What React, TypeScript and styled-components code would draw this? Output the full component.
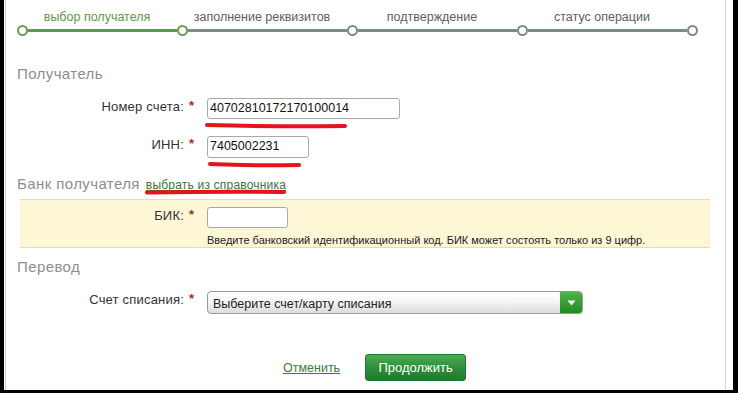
import React from "react";
import styled, { createGlobalStyle } from "styled-components";

const GlobalStyle = createGlobalStyle`
  html, body {
    margin: 0;
    padding: 0;
    background: #000;
  }
  body {
    font-family: "Liberation Sans", Arial, sans-serif;
  }
`;

const Frame = styled.div`
  width: 729px;
  height: 390px;
  margin-left: 4px;
  background: #fff;
  padding-left: 1px;
  box-sizing: border-box;
  overflow: hidden;
`;

const Panel = styled.div`
  width: 721px;
  height: 390px;
  box-sizing: border-box;
  border-left: 1px solid #cfcfcf;
  border-right: 1px solid #d6d6d6;
  padding-left: 11px;
`;

const Steps = styled.div`
  display: flex;
  align-items: flex-end;
  padding-top: 9px;
`;

const Step = styled.div<{ $w?: number }>`
  display: flex;
  flex-direction: column;
  width: ${(p) => (p.$w ? `${p.$w}px` : "auto")};
`;

const StepLabel = styled.div<{ $active?: boolean }>`
  height: 16px;
  line-height: 16px;
  font-size: 12.5px;
  text-align: center;
  white-space: nowrap;
  color: ${(p) => (p.$active ? "#5c9a45" : "#5e5e5e")};
`;

const Track = styled.div`
  display: flex;
  align-items: center;
  height: 11px;
`;

const Dot = styled.span<{ $active?: boolean }>`
  width: 11px;
  height: 11px;
  box-sizing: border-box;
  border-radius: 50%;
  background: #fff;
  border: 2px solid ${(p) => (p.$active ? "#64a04f" : "#7c8a8b")};
  flex: none;
`;

const Line = styled.span<{ $active?: boolean }>`
  flex: 1;
  height: 3px;
  background: ${(p) => (p.$active ? "#5e9a49" : "#7b8a8b")};
`;

const Heading = styled.div<{ $mt: number }>`
  margin-top: ${(p) => p.$mt}px;
  font-size: 15px;
  line-height: 18px;
  letter-spacing: 0.4px;
  color: #8e8e8e;
  display: flex;
  align-items: baseline;
  gap: 6px;
`;

const Row = styled.div<{ $mt: number }>`
  display: flex;
  align-items: flex-start;
  margin-top: ${(p) => p.$mt}px;
`;

const Label = styled.div`
  width: 167px;
  text-align: right;
  font-size: 13px;
  line-height: 18px;
  color: #333;
  letter-spacing: 0.2px;
`;

const Star = styled.span`
  width: 23px;
  padding-left: 5px;
  box-sizing: border-box;
  color: #a52a2a;
  font-size: 13px;
  line-height: 16px;
  font-weight: bold;
`;

const FieldWrap = styled.div`
  position: relative;
  display: flex;
  flex-direction: column;
`;

const Input = styled.div<{ $w: number; $h?: number }>`
  width: ${(p) => p.$w}px;
  height: ${(p) => p.$h ?? 21}px;
  box-sizing: border-box;
  border: 1px solid #a9a9a9;
  border-radius: 3px;
  background: #fff;
  font-family: "Liberation Sans", Tahoma, sans-serif;
  font-size: 12.5px;
  line-height: 19px;
  padding-left: 2px;
  color: #111;
`;

const Scribble = styled.svg<{ $top: number; $left: number }>`
  position: absolute;
  top: ${(p) => p.$top}px;
  left: ${(p) => p.$left}px;
  overflow: visible;
`;

const Link = styled.a`
  font-size: 12px;
  letter-spacing: 0.2px;
  color: #2f7a33;
  text-decoration: underline;
  position: relative;
`;

const BankBox = styled.div`
  margin: 5px 0 0 3px;
  width: 690px;
  box-sizing: border-box;
  background: #fdf7d6;
  border-top: 1px solid #e8dea3;
  border-bottom: 1px solid #e8dea3;
  padding: 7px 0 0;
`;

const BoxRow = styled(Row)`
  margin-left: -3px;
`;

const Hint = styled.div`
  font-size: 11px;
  line-height: 14px;
  margin-top: 5px;
  color: #222;
  white-space: nowrap;
`;

const Select = styled.div`
  width: 376px;
  height: 23px;
  box-sizing: border-box;
  border: 1px solid #9a9a9a;
  border-radius: 4px;
  background: linear-gradient(#ffffff 0%, #f6f6f6 45%, #dcdcdc 100%);
  display: flex;
  align-items: center;
  overflow: hidden;
  font-size: 12.5px;
  color: #222;
`;

const SelectText = styled.span`
  flex: 1;
  padding-left: 5px;
  padding-top: 2px;
`;

const SelectArrow = styled.span`
  width: 22px;
  height: 100%;
  background: linear-gradient(#4fb449, #1f8c23);
  display: flex;
  align-items: center;
  justify-content: center;
`;

const Actions = styled.div`
  display: flex;
  align-items: center;
  margin-top: 40px;
  padding-left: 266px;
  gap: 25px;
`;

const CancelLink = styled.a`
  font-size: 12.5px;
  color: #3b7d3b;
  text-decoration: underline;
`;

const Button = styled.button`
  width: 101px;
  height: 27px;
  border: 1px solid #1f7a2c;
  border-radius: 3px;
  background: linear-gradient(#4eaa52 0%, #2f8f3a 50%, #1f7a2d 100%);
  color: #fff;
  font-family: "Liberation Sans", Arial, sans-serif;
  font-size: 13px;
  padding: 0;
`;

const RedStroke = ({ top, left, width, tilt = 0 }: { top: number; left: number; width: number; tilt?: number }) => (
  <Scribble $top={top} $left={left} width={width} height={6} viewBox={`0 0 ${width} 6`}>
    <path
      d={`M2 ${3 - tilt} Q ${width / 2} ${3 + tilt} ${width - 2} 3`}
      stroke="#e3141b"
      strokeWidth={4}
      strokeLinecap="round"
      fill="none"
    />
  </Scribble>
);

const steps = [
  { label: "выбор получателя", w: 160, active: true },
  { label: "заполнение реквизитов", w: 170 },
  { label: "подтверждение", w: 170 },
  { label: "статус операции", w: 170 },
];

export default function App() {
  return (
    <>
      <GlobalStyle />
      <Frame>
        <Panel>
          <Steps>
            {steps.map((s, i) => (
              <Step key={s.label} $w={s.w}>
                <StepLabel $active={s.active}>{s.label}</StepLabel>
                <Track>
                  <Dot $active={i < 2} />
                  <Line $active={s.active} />
                </Track>
              </Step>
            ))}
            <Step>
              <Track>
                <Dot />
              </Track>
            </Step>
          </Steps>

          <Heading $mt={29}>Получатель</Heading>

          <Row $mt={15}>
            <Label>Номер счета:</Label>
            <Star>*</Star>
            <FieldWrap>
              <Input $w={193}>40702810172170100014</Input>
              <RedStroke top={25} left={-2} width={142} tilt={1} />
            </FieldWrap>
          </Row>

          <Row $mt={17}>
            <Label>ИНН:</Label>
            <Star>*</Star>
            <FieldWrap>
              <Input $w={102} $h={22}>7405002231</Input>
              <RedStroke top={26} left={1} width={93} tilt={1} />
            </FieldWrap>
          </Row>

          <Heading $mt={17}>
            Банк получателя
            <Link>
              выбрать из справочника
              <RedStroke top={13} left={-1} width={141} tilt={-0.5} />
            </Link>
          </Heading>

          <BankBox>
            <BoxRow $mt={0}>
              <Label>БИК:</Label>
              <Star>*</Star>
              <FieldWrap>
                <Input $w={81} />
                <Hint>
                  Введите банковский идентификационный код. БИК может состоять только из 9 цифр.
                </Hint>
              </FieldWrap>
            </BoxRow>
          </BankBox>

          <Heading $mt={10}>Перевод</Heading>

          <Row $mt={15}>
            <Label>Счет списания:</Label>
            <Star>*</Star>
            <Select>
              <SelectText>Выберите счет/карту списания</SelectText>
              <SelectArrow>
                <svg width="9" height="6" viewBox="0 0 9 6">
                  <path d="M0.5 0.5 L8.5 0.5 L4.5 5.5 Z" fill="#fff" />
                </svg>
              </SelectArrow>
            </Select>
          </Row>

          <Actions>
            <CancelLink>Отменить</CancelLink>
            <Button>Продолжить</Button>
          </Actions>
        </Panel>
      </Frame>
    </>
  );
}
